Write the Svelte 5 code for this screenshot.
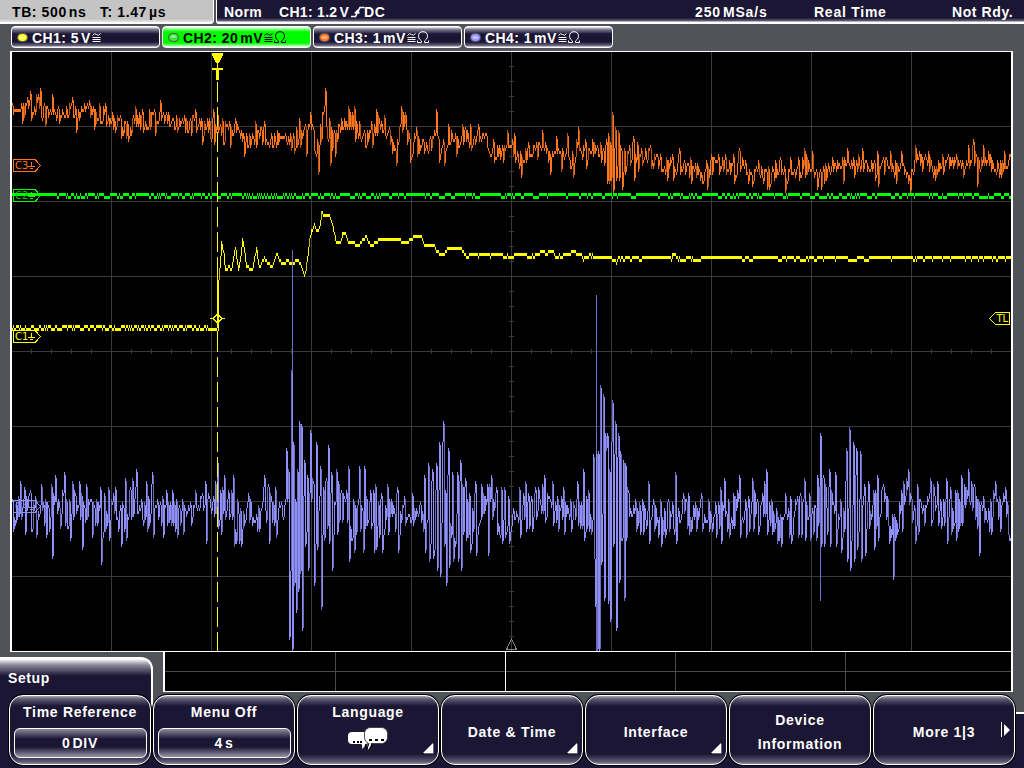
<script>
  function rng(seed) {
    let s = seed;
    return () => {
      s = (s * 1664525 + 1013904223) % 4294967296;
      return s / 4294967296;
    };
  }

  // vertical resolution of the display is three pixels
  const q = (y) => Math.round((y - 1) / 3) * 3 + 1;

  function columns(ys, x0, steep) {
    let bright = '';
    let dim = '';
    for (let i = 0; i < ys.length; i++) {
      const a = i ? ys[i - 1] : ys[i];
      const b = ys[i];
      let top = b;
      let bottom = b + 3;
      if (a < b) top = Math.min(b, a + 3);
      if (a > b) bottom = Math.max(b + 3, a);
      const seg = `M${x0 + i + 0.5} ${top}V${Math.min(bottom, 651)}`;
      if (bottom - top > steep && i % 3 === 0) dim += seg;
      else bright += seg;
    }
    return { bright, dim };
  }

  const pairs = (text) => text.trim().split(/\s+/).map((p) => p.split(',').map(Number));

  function noise(text, seed, flip) {
    const pts = pairs(text);
    const r = rng(seed);
    const ys = [];
    let k = 0;
    let side = 1;
    for (let x = 12; x <= 1010; x++) {
      while (k < pts.length - 2 && pts[k + 1][0] <= x) k++;
      const [xa, ta, ba] = pts[k];
      const [xb, tb, bb] = pts[k + 1];
      const f = Math.min(1, Math.max(0, (x - xa) / (xb - xa)));
      const t = ta + (tb - ta) * f;
      const b = ba + (bb - ba) * f;
      if (r() < flip) side = -side;
      let y = (t + b) / 2 + side * (0.05 + 0.8 * r()) * (b - t) * 0.5;
      if (x === xa) y = ta;
      else if (x === xa + 1) y = ba - 2;
      ys.push(q(y));
    }
    return ys;
  }

  const c3 = columns(noise(`12,102,115 21,103,124 30,92,120 40,88,118 44,104,126 52,94,115 58,105,124 66,105,116
    72,97,118 75,107,133 84,104,112 89,100,116 93,105,130 99,104,124 105,103,125 112,112,130 120,116,138 127,121,142
    135,107,127 142,109,132 149,110,128 154,108,136 160,100,120 168,112,125 176,116,132 184,115,131 190,117,134
    195,108,132 201,118,145 207,118,131 213,109,145 217,112,132 222,118,144 229,122,146 235,119,131 243,132,156
    249,133,147 255,121,146 264,121,143 271,132,148 277,131,145 285,132,142 293,132,152 299,118,146 305,123,157
    310,112,130 313,127,150 317,140,174 320,124,142 325,88,127 329,118,165 334,130,155 341,118,130 348,106,130
    354,106,140 359,121,138 364,129,147 371,121,147 376,109,134 384,115,134 389,127,144 395,148,165 401,106,132
    405,112,130 409,135,162 416,127,155 423,140,153 430,135,150 436,109,135 438,135,162 443,140,165 448,124,144
    455,132,157 462,124,145 470,124,150 478,125,142 486,134,148 493,140,162 502,144,163 507,130,148 514,132,162
    520,150,177 528,142,156 536,142,158 542,130,148 549,150,175 556,136,152 560,150,171 567,133,155 572,152,178
    578,127,150 585,140,168 592,139,156 600,143,162 606,140,182 608,133,183 610,142,180 612,112,193 615,127,180
    618,130,180 621,148,190 624,149,175 629,145,165 633,136,180 637,142,172 641,148,166 650,145,168 660,153,172
    666,158,180 672,155,180 679,148,175 684,161,173 690,157,183 697,162,175 706,160,190 711,155,175 718,154,173
    725,154,175 733,155,183 739,148,172 745,159,175 751,172,187 758,160,174 768,166,190 775,161,178 780,157,174
    784,165,193 790,157,175 798,158,180 804,148,178 812,151,172 816,168,190 820,170,189 825,163,180 832,157,172
    842,158,184 847,148,162 853,158,177 862,148,172 871,160,171 877,151,187 883,157,175 890,151,170 895,160,184
    901,151,166 907,173,184 909,176,193 915,145,163 921,153,170 928,151,172 934,165,180 942,154,174 948,155,168
    956,155,168 962,160,178 968,145,169 973,139,165 976,154,187 983,145,165 990,153,172 1000,160,178 1004,151,168
    1010,148,165`, 77, 0.5), 12, 9);

  const c4 = columns(noise(`12,498,532 20,481,520 24,487,535 30,490,530 35,497,538 41,484,510 45,500,538 51,484,559
    55,475,500 59,505,528 64,472,525 69,500,541 72,481,520 79,481,520 81,493,550 86,483,520 91,500,538 96,498,525
    100,487,565 104,492,530 108,487,541 115,487,520 120,505,547 125,477,541 132,478,515 136,469,512 141,500,520
    146,481,532 152,472,538 157,500,520 162,497,538 166,490,525 172,490,525 176,500,538 182,500,535 190,503,526
    195,490,508 202,493,510 205,481,544 213,495,515 217,460,528 220,490,535 224,475,520 228,490,518 233,475,547
    240,507,547 248,493,522 258,505,532 264,475,510 268,484,544 275,487,538 281,503,515 285,500,544 286,448,500
    288,470,640 291,370,651 293,442,585 295,500,613 297,468,592 299,421,573 301,424,631 304,460,547 307,475,571
    310,430,500 313,480,586 316,442,550 320,466,610 323,487,540 328,445,542 331,472,571 336,469,535 341,490,522
    346,490,523 348,466,562 353,500,553 359,466,530 362,507,551 364,466,527 370,490,529 373,490,553 375,484,550
    381,493,551 387,484,535 391,499,515 397,487,553 404,497,526 412,493,526 420,503,522 424,475,553 428,463,562
    432,470,557 436,463,571 439,442,577 443,421,545 445,490,586 448,448,568 452,472,562 457,472,562 460,460,571
    465,478,540 469,493,551 475,481,556 481,484,515 487,484,556 491,475,520 496,487,535 501,488,544 504,487,538
    508,497,544 513,507,520 519,487,538 525,481,530 531,495,530 535,487,520 544,475,522 552,481,524 557,495,530
    563,487,535 570,498,532 577,481,524 583,469,541 588,490,530 593,455,559 596,450,651 598,450,651 600,385,565
    603,394,601 607,433,604 609,469,620 612,400,547 615,421,631 618,433,583 620,451,540 623,460,601 625,462,540
    628,490,517 635,500,532 642,500,535 648,481,544 653,500,530 660,500,547 668,500,532 675,472,544 683,493,514
    688,493,535 695,503,532 701,493,532 708,500,532 715,503,538 720,487,544 724,478,515 728,500,538 733,493,528
    739,475,538 745,500,538 752,478,530 757,499,535 766,469,535 771,500,534 776,508,544 780,515,547 785,493,513
    790,497,544 797,495,538 804,478,541 809,493,541 815,505,541 817,475,525 820,433,545 823,475,545 829,469,547
    835,472,547 840,500,553 846,448,560 849,427,569 853,442,562 856,448,550 860,451,562 864,484,556 868,481,528
    873,490,550 877,475,541 883,484,500 887,495,525 892,515,580 894,515,540 901,490,532 903,481,505 908,469,505
    914,505,542 917,484,535 923,505,525 930,478,525 937,481,525 946,478,544 950,487,535 955,490,541 961,475,525
    968,469,500 974,484,520 978,500,556 983,496,522 990,500,535 995,481,500 999,496,532 1005,487,515
    1009,510,550`, 4242, 0.58), 12, 14);
  c4.dim += 'M292.5 250V651M596.5 295V651M820.5 433V601';

  function flicker(level, seed, chance) {
    const r = rng(seed);
    const ys = [];
    let y = 0;
    for (let x = 12; x <= 1010; x++) {
      if (y) { if (r() < 0.4) y = 0; }
      else if (r() < chance(x)) y = 1;
      ys.push(level + y * 3);
    }
    return ys;
  }

  const c2 = columns(flicker(193, 9, (x) => (x < 56 ? 0 : x > 245 && x < 304 ? 0.9 : 0.2)), 12, 99);

  const base = pairs(`12,325 216,328 217,328 218,277 219,268 221,241 223,250 224,262 225,268 229,265 231,268 234,250
    235,247 236,256 238,268 240,256 242,238 244,250 246,265 252,268 254,256 256,247 258,262 260,265 262,259 264,256
    267,262 272,265 274,259 277,252 279,258 282,262 284,262 287,259 291,262 298,259 300,262 302,268 304,274 305,270
    307,255 309,238 311,230 314,223 317,230 319,226 321,211 325,214 329,214 332,223 335,238 337,242 340,242 342,232
    345,233 348,241 353,242 358,244 362,239 366,235 369,242 372,244 375,241 378,239 400,239 405,242 409,239 414,235
    421,235 424,244 434,244 437,251 444,253 447,247 460,247 463,251 467,256 470,253 502,254 505,256 508,253 525,253
    528,256 535,253 543,250 553,250 557,256 562,252 567,253 573,250 580,254 586,256 590,253 595,256 608,255 613,259
    620,256 660,256 675,254 680,258 700,256 1011,256`);

  function stepTrace() {
    const ripple = flicker(0, 31, (x) => (x < 217 ? 0.4 : x > 610 ? 0.1 : x > 470 ? 0.06 : 0));
    const ys = [];
    let k = 0;
    for (let x = 12; x <= 1010; x++) {
      while (k < base.length - 2 && base[k + 1][0] <= x) k++;
      const [xa, ya] = base[k];
      const [xb, yb] = base[k + 1];
      const y = x < 217 ? 325 : ya + ((yb - ya) * (x - xa)) / (xb - xa);
      ys.push(q(y) + ripple[x - 12]);
    }
    return ys;
  }
  const c1 = columns(stepTrace(), 12, 8);

  const traces = [
    { ...c1, color: '#ffff00', shade: '#c0c000' },
    { ...c2, color: '#00ff00', shade: '#00b000' },
    { ...c3, color: '#ff761c', shade: '#b85415' },
    { ...c4, color: '#8f8ff9', shade: '#6c6cbc' },
  ];

  let grid = '';
  for (let x = 111; x < 1000; x += 100) grid += `M${x + 0.5} 52V651`;
  for (let y = 126; y < 600; y += 75) grid += `M12 ${y + 0.5}H1011`;
  for (let x = 31; x < 1010; x += 20) grid += `M${x + 0.5} 349V354`;
  for (let y = 66; y < 650; y += 15) grid += `M509 ${y + 0.5}H514`;

  const channels = [
    { name: 'CH1:', value: '5', unit: 'V', dot: '#ffff20', omega: false },
    { name: 'CH2:', value: '20', unit: 'mV', dot: '#35e835', omega: true, active: true },
    { name: 'CH3:', value: '1', unit: 'mV', dot: '#ff7a24', omega: true },
    { name: 'CH4:', value: '1', unit: 'mV', dot: '#9696ff', omega: true },
  ];

  const keys = [
    { label: 'Time Reference', value: '0', unit: 'DIV' },
    { label: 'Menu Off', value: '4', unit: 's' },
    { label: 'Language', bubbles: true, corner: true },
    { label: 'Date & Time', corner: true },
    { label: 'Interface', corner: true },
    { label: 'Device\nInformation' },
    { label: 'More 1|3', next: true },
  ];
</script>

<div class="scope">
  <header>
    <div class="timebase"><span class="tb">TB: 500<i></i>ns</span><span>T: 1.47<i></i>µs</span></div>
    <div class="status">
      <span class="mode">Norm</span>
      <span class="source">CH1: 1.2<i></i>V</span>
      <svg class="slope" width="14" height="12" viewBox="0 0 14 12"><path d="M0 10.5H4.5L9 1.5H13.5M3.8 7.5L6.5 4.5L8.2 7.5" /></svg>
      <span>DC</span>
      <span class="rate">250<i></i>MSa/s</span>
      <span class="acq">Real Time</span>
      <span class="ready">Not Rdy.</span>
    </div>
  </header>

  <nav>
    {#each channels as c}
      <div class="channel" class:active={c.active}>
        <svg width="11" height="9" viewBox="0 0 11 9">
          <rect x=".5" y=".5" width="10" height="8" rx="4" fill={c.dot} stroke="#504c58" />
          <ellipse cx="5.5" cy={c.active ? 3.5 : 4.5} rx="3" ry="1.2" fill="#fff" opacity=".5" />
        </svg>
        <span>{c.name} {c.value}<i></i>{c.unit}</span>
        <svg class="coupling" width="9" height="11" viewBox="0 0 9 11"><path d="M.5 3.5Q2.5 .5 4.5 2.5T8.5 1.5M.5 5.5H8.5M.5 7.5H8.5M.5 9.5H8.5" /></svg>
        {#if c.omega}
          <svg class="coupling" width="12" height="12" viewBox="0 0 12 12"><path d="M.5 9.5V11.5H4.5V10Q1.5 8 1.5 5.5Q1.5 .7 6 .7Q10.5 .7 10.5 5.5Q10.5 8 7.5 10V11.5H11.5V9.5" /></svg>
        {/if}
      </div>
    {/each}
  </nav>

  <main>
    <svg width="1003" height="601" viewBox="10 51 1003 601" shape-rendering="crispEdges">
      <rect x="10" y="51" width="1003" height="601" fill="#fff" />
      <rect x="12" y="52" width="999" height="599" fill="#000" />
      <path d={grid} stroke="#3a3a3a" fill="none" />
      <path d="M506.5 649.5H516.5L511.5 639Z" stroke="#858585" fill="none" />

      {#each traces as t}
        <path d={t.dim} stroke={t.shade} fill="none" />
        <path d={t.bright} stroke={t.color} fill="none" />
      {/each}

      <path d="M217.5 82V651" stroke="#ffff20" stroke-dasharray="20 5" />
      <path d="M217.5 277V328" stroke="#ffff00" />
      <path d="M212 53H223V55L219 63H216L212 55Z" fill="#ffff00" />
      <path d="M217.5 62V68" stroke="#ffff00" />
      <path d="M212 68H223V70H219V80H216V70H212Z" fill="#ffff00" />
      <path d="M210 318.5H213M222 318.5H225M213 318.5L217.5 314L222 318.5L217.5 323Z" stroke="#ffff00" fill="none" />

      <g fill="none" class="tags">
        <g stroke="#ff761c"><path d="M13.5 159.5H35L40.5 165.5L35 171.5H13.5ZM31.5 162V166M28 166.5H35M30 168.5H33" /><text x="15" y="169" fill="#ff761c">C3</text></g>
        <g stroke="#00ff00"><path d="M13.5 189.5H35L40.5 195.5L35 201.5H13.5ZM31.5 192V196M28 196.5H35M30 198.5H33" /><text x="15" y="199" fill="#00d000">C2</text></g>
        <g stroke="#ffff00"><path d="M13.5 330.5H35L40.5 336.5L35 342.5H13.5ZM31.5 333V337M28 337.5H35M30 339.5H33" /><text x="15" y="340" fill="#ffff00">C1</text></g>
        <g stroke="#8f8ff9"><path d="M13.5 500.5H35L40.5 506.5L35 512.5H13.5ZM31.5 503V507M28 507.5H35M30 509.5H33" /><text x="15" y="510" fill="#8f8ff9">C4</text></g>
        <g stroke="#ffff00"><path d="M1009.5 312.5H995.5L989.5 318.5L995.5 324.5H1009.5Z" /><text x="996.5" y="322" fill="#ffff00">TL</text></g>
      </g>
    </svg>
  </main>

  <footer>
    <div class="middle">
      <div class="tab">Setup</div>
      <svg class="overview" width="850" height="40" viewBox="163 652 850 40" shape-rendering="crispEdges">
        <rect x="163" y="652" width="850" height="40" fill="#fff" />
        <rect x="165" y="652" width="846" height="39" fill="#000" />
        <path d="M165 671.5H1011M335.5 652V691M675.5 652V691M845.5 652V691" stroke="#4a4a4a" />
        <path d="M505.5 652V691" stroke="#fff" />
      </svg>
    </div>
    <div class="keys">
      {#each keys as k}
        <div class="key" class:top={k.value || k.bubbles}>
          <div class="label">{k.label}</div>
          {#if k.value}
            <div class="value">{k.value}<i></i>{k.unit}</div>
          {/if}
          {#if k.bubbles}
            <svg width="42" height="24" viewBox="0 0 42 24">
              <rect x="1" y="5" width="21" height="12" rx="4" fill="#fff" />
              <path d="M13 16Q16 17 15 22L18 19V15Z" fill="#fff" />
              <rect x="17.5" y=".5" width="23" height="16" rx="6" fill="#fff" stroke="#444" />
              <path d="M25 15Q24 19 21 23Q20 19 21 15Z" fill="#fff" />
              <path d="M22 16L20 22L18 18M25 16Q25 20 22 23" fill="none" stroke="#000" />
              <path d="M6 15H8M10 15H12M13 15H15M22 13H25M28 13H31M34 13H37" stroke="#000" stroke-width="2" />
            </svg>
          {/if}
          {#if k.corner}
            <svg class="corner" width="11" height="11" viewBox="0 0 11 11"><path d="M10.5 1V10.5H1" fill="none" stroke="#66627a" /><path d="M0 10H10V0Z" fill="#fff" /></svg>
          {/if}
          {#if k.next}
            <svg class="next" width="10" height="16" viewBox="0 0 10 16"><path d="M.5 0V15" stroke="#fff" /><path d="M3 2L9 8L3 14Z" fill="#fff" /></svg>
          {/if}
        </div>
      {/each}
    </div>
  </footer>
</div>

<style>
  :global(body) { background: #505357; }
  .scope {
    width: 1024px; height: 768px; overflow: hidden;
    display: flex; flex-direction: column;
    background: #505357; color: #fff;
    font: bold 14px "Liberation Sans", Arial, sans-serif;
    letter-spacing: .6px; white-space: nowrap;
  }
  i { display: inline-block; width: 2px; }

  header { display: flex; height: 24px; gap: 2px; line-height: 24px; flex: none; }
  .timebase {
    width: 214px; padding-left: 12px; box-sizing: border-box; color: #000;
    display: flex;
    background: linear-gradient(#c4c4c4 0 19px, #e6e6e6 22px, #fff 22px);
    border-right: 1px solid #fff; border-bottom-right-radius: 4px;
  }
  .tb { width: 88px; }
  .status {
    flex: 1; display: flex; padding-left: 7px; border-left: 1px solid #fff;
    background: linear-gradient(#1b1634 0 18px, #6a657c 21px, #fff 22px);
    border-bottom-left-radius: 3px;
  }
  .mode { width: 55px; letter-spacing: .4px; }
  .source { width: 72px; letter-spacing: .3px; }
  .slope { margin-top: 6px; margin-right: -1px; fill: none; stroke: #fff; stroke-width: 1.6; }
  .rate { margin-left: auto; width: 119px; letter-spacing: .85px; }
  .acq { width: 138px; letter-spacing: .75px; }
  .ready { width: 72px; }

  nav { display: flex; gap: 2px; height: 22px; flex: none; margin: 2px 0 3px 11px; }
  .channel {
    width: 149px; height: 22px; box-sizing: border-box;
    display: flex; align-items: center; padding-left: 5px;
    border: 1px solid #fff; border-radius: 4px;
    background: linear-gradient(#fff 0, #89859a 2px, #1b1634 7px 15px, #77738b 19px, #fff 20px);
  }
  .channel span { margin-left: 4px; margin-right: 1px; padding-top: 1px; letter-spacing: .45px; }
  .active { color: #000; background: linear-gradient(#fff 0, #80ff80 2px, #00fb00 5px 16px, #a0ffa0 19px, #fff 20px); }
  .coupling { flex: none; fill: none; stroke: currentColor; stroke-width: 1; margin-right: 1px; }

  main { margin-left: 10px; height: 601px; flex: none; }
  main svg, .overview { display: block; }
  .tags text { stroke: none; font: 10px "DejaVu Sans", sans-serif; letter-spacing: 0; }

  footer { flex: 1; display: flex; flex-direction: column; background: linear-gradient(#505357 60px, #fff 60px 62px, #1b1634 62px); }
  .middle { display: flex; height: 43px; gap: 10px; }
  .tab {
    width: 153px; height: 57px; margin-top: 5px; box-sizing: border-box;
    padding: 11px 0 0 8px; border-right: 2px solid #fff; border-top: 2px solid #fff;
    border-top-right-radius: 12px;
    background: linear-gradient(#fff 0, #8b889c 6px, #1b1634 17px);
  }
  .keys { display: flex; gap: 2px; padding-left: 9px; z-index: 1; }
  .key {
    position: relative; width: 142px; height: 70px; box-sizing: border-box;
    display: flex; flex-direction: column; align-items: center; justify-content: center;
    border: 1.5px solid #fff; border-radius: 14px; box-shadow: 0 0 0 1px #000;
    background: linear-gradient(#aaa7b5 0, #5f5b72 3px, #1b1634 10px 58px, #625e76 66px, #aaa7b5 69px);
    line-height: 24px; text-align: center; letter-spacing: .7px;
  }
  .key.top { justify-content: flex-start; }
  .label { white-space: pre; padding-top: 3px; }
  .top .label { padding-top: 4px; }
  .value {
    width: 133px; height: 30px; box-sizing: border-box; margin-top: 4px;
    border: 1.5px solid #fff; border-radius: 6px; line-height: 29px;
    background: linear-gradient(#8d899c 0, #1b1634 10px 18px, #8d899c 27px);
  }
  .key > svg { margin-top: 3px; }
  .key > .corner { position: absolute; right: 4px; bottom: 10px; }
  .key > .next { position: absolute; right: 3px; top: 23px; }
</style>
